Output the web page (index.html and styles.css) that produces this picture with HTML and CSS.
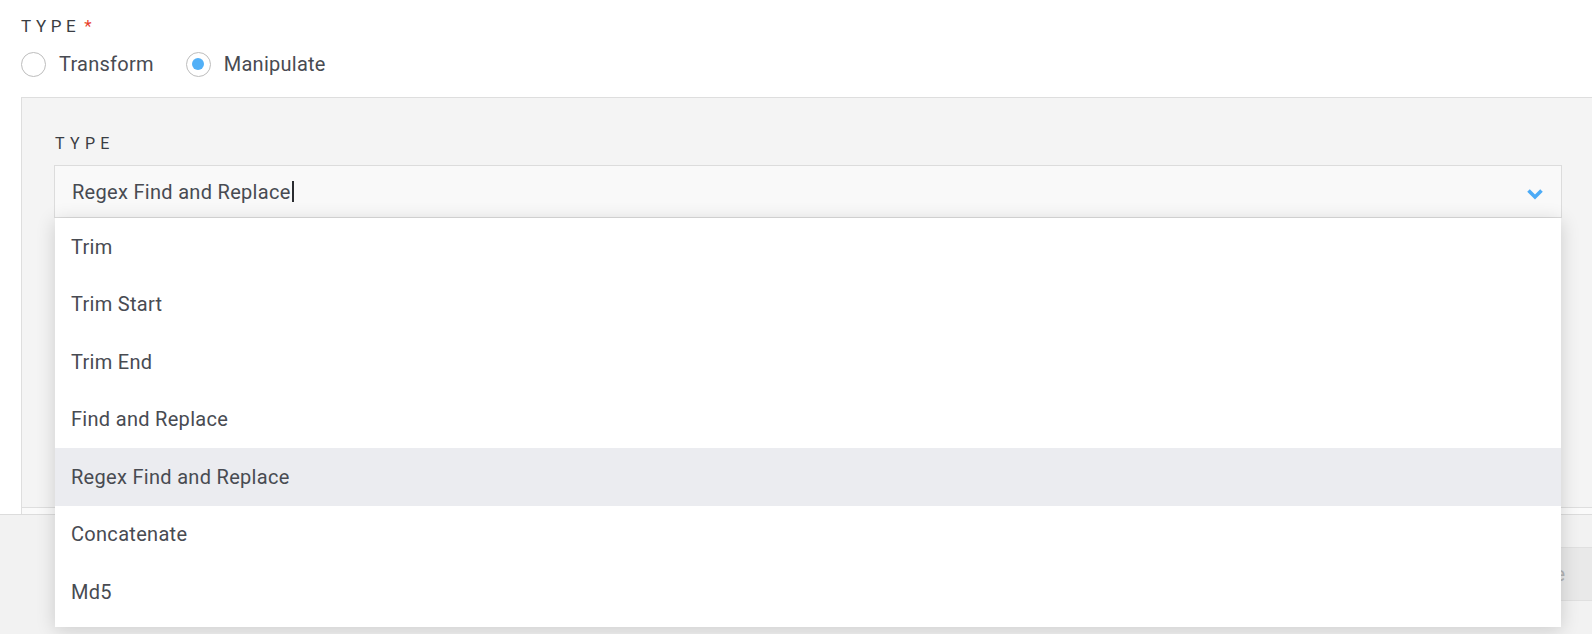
FILE: index.html
```html
<!DOCTYPE html>
<html lang="en">
<head>
<meta charset="utf-8">
<title>Type</title>
<link rel="stylesheet" href="styles.css">
</head>
<body>
<div class="page">
  <div class="content">
    <div class="label outer">TYPE<span class="req">*</span></div>
    <div class="radios">
      <div class="radio"><span class="circle"></span><span class="radio-text">Transform</span></div>
      <div class="radio"><span class="circle checked"></span><span class="radio-text">Manipulate</span></div>
    </div>
    <div class="panel">
      <div class="label inner">TYPE</div>
      <div class="select">
        <div class="select-input">
          <span class="value">Regex Find and Replace</span><span class="caret"></span>
          <svg class="chevron" width="16" height="12" viewBox="0 0 16 12"><path d="M1.5 2.5 L8 9 L14.5 2.5" fill="none" stroke="#4cabf6" stroke-width="3.6"/></svg>
        </div>
        <ul class="menu">
          <li class="item">Trim</li>
          <li class="item">Trim Start</li>
          <li class="item">Trim End</li>
          <li class="item">Find and Replace</li>
          <li class="item active">Regex Find and Replace</li>
          <li class="item">Concatenate</li>
          <li class="item">Md5</li>
        </ul>
      </div>
    </div>
    <div class="next-panel"></div>
  </div>
  <div class="footer">
    <button class="btn" disabled>Save</button>
  </div>
</div>
</body>
</html>
```

FILE: styles.css
```css
* { box-sizing: border-box; }
html, body { margin: 0; padding: 0; }
body {
  font-family: Roboto, "Noto Sans", "Liberation Sans", sans-serif;
  background: #ffffff;
  color: #484b52;
  overflow: hidden;
  width: 1592px;
  height: 634px;
}
.page {
  width: 1640px;
  display: flex;
  flex-direction: column;
}
.content {
  padding: 16px 0 0 21px;
  height: 514px;
}
.label {
  font-weight: 400;
  text-transform: uppercase;
  color: #3a3d43;
  line-height: 20px;
}
.label.outer {
  font-size: 17px;
  letter-spacing: 4.6px;
}
.req {
  color: #e8412c;
  margin-left: 4px;
}
.radios {
  display: flex;
  align-items: center;
  gap: 32px;
  margin-top: 15px;
  height: 26px;
}
.radio {
  display: flex;
  align-items: center;
  gap: 13px;
  font-size: 20px;
  letter-spacing: 0.25px;
  color: #484b52;
}
.circle {
  width: 25px;
  height: 25px;
  border-radius: 50%;
  border: 1px solid #bdbdbd;
  background: #fff;
  display: flex;
  align-items: center;
  justify-content: center;
}
.circle.checked::after {
  content: "";
  width: 12px;
  height: 12px;
  border-radius: 50%;
  background: #52b0f7;
}
.panel {
  margin-top: 20px;
  width: 1580px;
  height: 411px;
  background: #f4f4f4;
  border: 1px solid #dedede;
  padding: 36px 33px 0 32px;
}
.label.inner {
  font-size: 16px;
  letter-spacing: 5.3px;
  padding-left: 1px;
}
.select {
  position: relative;
  margin-top: 11px;
  width: 1508px;
}
.select-input {
  height: 53px;
  border: 1px solid #dcdcdc;
  background: #f9f9f9;
  display: flex;
  align-items: center;
  padding: 0 17px 0 17px;
  font-size: 20px;
  letter-spacing: 0.3px;
  color: #484b52;
}
.caret {
  width: 2px;
  height: 21px;
  background: #2a2c30;
  margin-left: 1px;
}
.chevron {
  margin-left: auto;
  margin-right: 1px;
  margin-top: 5px;
}
.menu {
  position: absolute;
  z-index: 10;
  top: 53px;
  left: 1px;
  right: 1px;
  margin: 0;
  padding: 0 0 6px 0;
  list-style: none;
  background: #ffffff;
  box-shadow: 0 3px 18px rgba(0, 0, 0, 0.16);
}
.item {
  height: 57.5px;
  display: flex;
  align-items: center;
  padding-left: 16px;
  font-size: 20px;
  letter-spacing: 0.3px;
  color: #484b52;
}
.item.active {
  background: #ebecf0;
}
.next-panel {
  height: 6px;
  width: 1580px;
  border-left: 1px solid #dedede;
  background: #fafafa;
}
.footer {
  height: 120px;
  border-top: 1px solid #dcdcdc;
  background: #f2f2f2;
  display: flex;
  justify-content: flex-end;
  align-items: flex-start;
  padding: 32px 44px 0 0;
}
.btn {
  height: 54px;
  padding: 0 30px;
  border: 1px solid #e0e0e0;
  background: #e9e9e9;
  color: #b5b5b5;
  font-family: Roboto, "Noto Sans", sans-serif;
  font-size: 20px;
}
```
